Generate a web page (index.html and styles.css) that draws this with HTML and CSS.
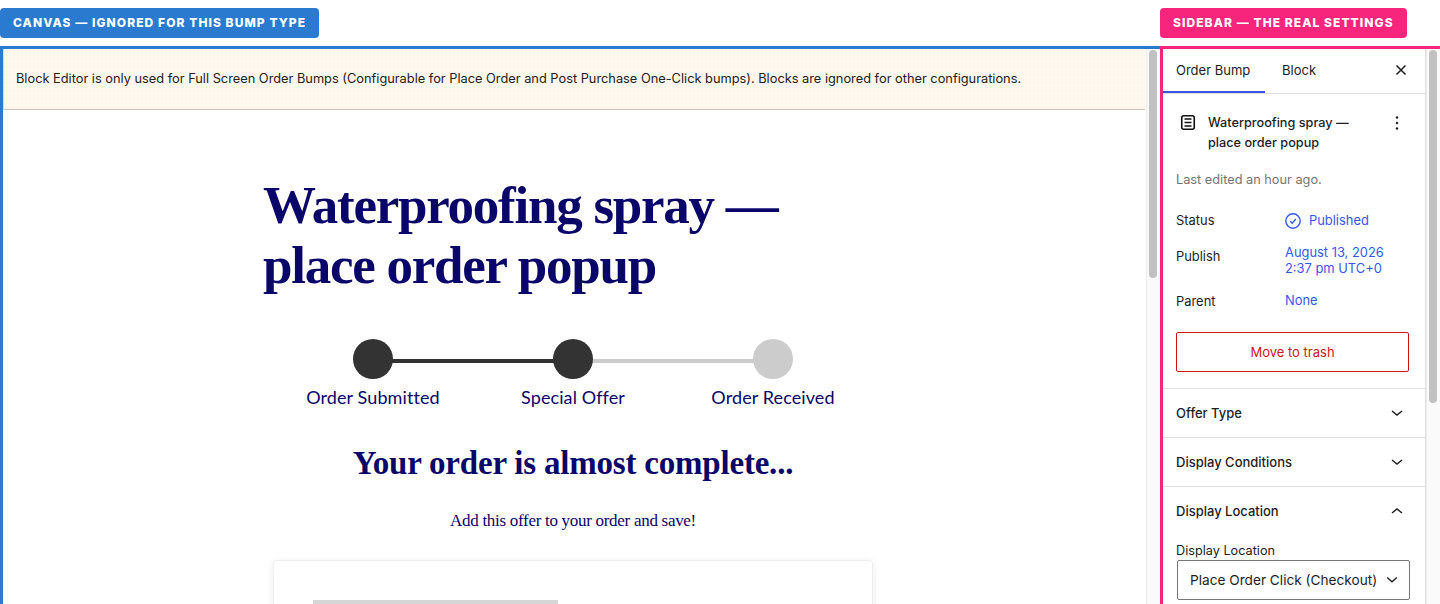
FILE: index.html
```html
<!DOCTYPE html>
<html lang="en">
<head>
    <meta charset="UTF-8">
    <title>Order Bump Editor</title>
    <link rel="stylesheet" href="styles.css">
</head>
<body>
    <div class="canvas-pane">
        <div class="pane-tag tag-canvas">CANVAS — IGNORED FOR THIS BUMP TYPE</div>
        <div class="pane-frame frame-canvas">
            <main class="canvas-content">
                <div class="notice">Block Editor is only used for Full Screen Order Bumps (Configurable for Place Order and Post Purchase One-Click bumps). Blocks are ignored for other configurations.</div>
                <div class="doc">
                    <h1 class="doc-title">Waterproofing spray — place order popup</h1>
                    <div class="steps">
                        <div class="step done">
                            <span class="step-dot"></span>
                            <span class="step-label">Order Submitted</span>
                        </div>
                        <div class="step done">
                            <span class="step-dot"></span>
                            <span class="step-label">Special Offer</span>
                        </div>
                        <div class="step">
                            <span class="step-dot"></span>
                            <span class="step-label">Order Received</span>
                        </div>
                    </div>
                    <h2 class="doc-heading">Your order is almost complete...</h2>
                    <p class="doc-sub">Add this offer to your order and save!</p>
                    <div class="offer-card">
                        <div class="offer-bar"></div>
                    </div>
                </div>
            </main>
            <div class="scrollbar"><div class="thumb thumb-canvas"></div></div>
        </div>
    </div>

    <div class="sidebar-pane">
        <div class="pane-tag tag-sidebar">SIDEBAR — THE REAL SETTINGS</div>
        <div class="pane-frame frame-sidebar">
            <aside class="sidebar">
                <div class="tabs">
                    <div class="tab active">Order Bump</div>
                    <div class="tab">Block</div>
                    <svg class="tab-close" width="24" height="24" viewBox="0 0 24 24"><path d="M7.5 7.5l9 9M16.5 7.5l-9 9" fill="none" stroke="#1e1e1e" stroke-width="1.5"/></svg>
                </div>

                <section class="summary">
                    <div class="summary-head">
                        <svg class="doc-icon" width="24" height="24" viewBox="0 0 24 24"><rect x="5.75" y="4.75" width="12.5" height="13.5" rx="2" fill="none" stroke="#111" stroke-width="1.6"/><path d="M8.5 8h7M8.5 11.5h7M8.5 15h7" stroke="#111" stroke-width="1.6"/></svg>
                        <div class="summary-title">Waterproofing spray — place order popup</div>
                        <svg class="kebab" width="24" height="24" viewBox="0 0 24 24"><circle cx="12" cy="6.5" r="1.2" fill="#1e1e1e"/><circle cx="12" cy="12" r="1.2" fill="#1e1e1e"/><circle cx="12" cy="17.5" r="1.2" fill="#1e1e1e"/></svg>
                    </div>
                    <div class="summary-note">Last edited an hour ago.</div>
                    <div class="meta-row row-status">
                        <span class="meta-label">Status</span>
                        <span class="meta-value status-value">
                            <svg width="16" height="16" viewBox="0 0 16 16"><circle cx="8" cy="8" r="7.2" fill="none" stroke="#3858e9" stroke-width="1.4"/><path d="M5.2 8.2l2 2 3.6-4.2" fill="none" stroke="#3858e9" stroke-width="1.4"/></svg>
                            Published
                        </span>
                    </div>
                    <div class="meta-row row-publish">
                        <span class="meta-label">Publish</span>
                        <span class="meta-value">August 13, 2026<br>2:37 pm UTC+0</span>
                    </div>
                    <div class="meta-row row-parent">
                        <span class="meta-label">Parent</span>
                        <span class="meta-value">None</span>
                    </div>
                    <button type="button" class="trash-btn">Move to trash</button>
                </section>

                <div class="panel">
                    <span>Offer Type</span>
                    <svg width="24" height="24" viewBox="0 0 24 24"><path d="M7 10l5 4 5-4" fill="none" stroke="#1e1e1e" stroke-width="1.5"/></svg>
                </div>
                <div class="panel">
                    <span>Display Conditions</span>
                    <svg width="24" height="24" viewBox="0 0 24 24"><path d="M7 10l5 4 5-4" fill="none" stroke="#1e1e1e" stroke-width="1.5"/></svg>
                </div>
                <div class="panel panel-open">
                    <span>Display Location</span>
                    <svg width="24" height="24" viewBox="0 0 24 24"><path d="M7 14l5-4 5 4" fill="none" stroke="#1e1e1e" stroke-width="1.5"/></svg>
                </div>
                <div class="panel-body">
                    <div class="field-label">Display Location</div>
                    <div class="select-box">
                        <span>Place Order Click (Checkout)</span>
                        <svg width="12" height="8" viewBox="0 0 12 8"><path d="M1.2 1.6L6 5.8l4.8-4.2" fill="none" stroke="#1e1e1e" stroke-width="1.3"/></svg>
                    </div>
                </div>
            </aside>
            <div class="scrollbar"><div class="thumb thumb-sidebar"></div></div>
        </div>
    </div>
</body>
</html>
```

FILE: styles.css
```css
:root {
    --blue: #2a7bcf;
    --pink: #f8257d;
    --link: #3858e9;
    --navy: #0a0569;
    --ink: #1e1e1e;
    --line: #e0e0e0;
}
html, body {
    height: 100%;
}
body {
    margin: 0;
    display: flex;
    height: 604px;
    overflow: hidden;
    background: #fff;
    font-family: Inter, 'Liberation Sans', sans-serif;
    color: var(--ink);
    font-size: 13px;
}
.canvas-pane {
    width: 1160px;
    flex: none;
    display: flex;
    flex-direction: column;
}
.sidebar-pane {
    flex: 1;
    min-width: 0;
    display: flex;
    flex-direction: column;
}
.pane-tag {
    align-self: flex-start;
    height: 30px;
    line-height: 30px;
    margin: 8px 0;
    padding: 0 13px;
    border-radius: 4px;
    color: #fff;
    font-size: 12px;
    font-weight: 800;
    letter-spacing: 1.07px;
    white-space: nowrap;
}
.tag-canvas { background: var(--blue); }
.tag-sidebar { background: var(--pink); }

.pane-frame {
    flex: 1;
    min-height: 0;
    display: flex;
    border-top: 3px solid;
    border-left: 3px solid;
}
.frame-canvas { border-color: var(--blue); }
.frame-sidebar { border-color: var(--pink); }

.scrollbar {
    width: 14px;
    flex: none;
    padding: 1px 3px 0;
    box-sizing: border-box;
    background: #fafafa;
    border-left: 1px solid #ececec;
}
.thumb {
    border-radius: 4px;
    background: #c1c1c1;
    margin-left: -1px;
}
.thumb-canvas { height: 228px; }
.thumb-sidebar { height: 353px; }

/* canvas */
.canvas-content {
    width: 1143px;
    flex: none;
    overflow: hidden;
}
.notice {
    height: 61px;
    box-sizing: border-box;
    margin-right: 1px;
    padding: 0 12px 2px;
    display: flex;
    align-items: center;
    white-space: nowrap;
    background-color: #fef8ef;
    background-image: radial-gradient(#fdf5ea 1px, transparent 1px);
    background-size: 4px 4px;
    border-left: 1px solid #e3d9c4;
    border-bottom: 1px solid #c9c5bc;
    color: #222;
    font-size: 12.8px;
}
.doc {
    width: 620px;
    margin-left: 260px;
    color: var(--navy);
    font-family: 'Liberation Serif', serif;
}
.doc-title {
    width: 540px;
    margin: 65px 0 0;
    font-size: 53px;
    line-height: 60px;
    font-weight: 700;
    letter-spacing: -1.25px;
}
.steps {
    display: flex;
    justify-content: center;
    margin-top: 44px;
}
.step {
    width: 200px;
    display: flex;
    flex-direction: column;
    align-items: center;
    position: relative;
}
.step-dot {
    width: 40px;
    height: 40px;
    border-radius: 50%;
    background: #ccc;
    position: relative;
    z-index: 1;
}
.step.done .step-dot {
    background: #333;
}
.step:not(:last-child)::after {
    content: '';
    position: absolute;
    top: 20px;
    left: 100px;
    width: 200px;
    height: 4px;
    background: #ccc;
}
.step.done:first-child::after {
    background: #333;
}
.step-label {
    margin-top: 8px;
    font-family: Lato, sans-serif;
    font-size: 18px;
    line-height: 21px;
    letter-spacing: 0.1px;
    white-space: nowrap;
}
.doc-heading {
    margin: 33px 0 0;
    text-align: center;
    font-size: 33px;
    line-height: 44px;
    font-weight: 700;
    letter-spacing: -0.2px;
}
.doc-sub {
    margin: 25px 0 0;
    text-align: center;
    font-size: 17px;
    line-height: 22px;
    font-weight: 400;
    letter-spacing: -0.29px;
}
.offer-card {
    width: 600px;
    height: 100px;
    box-sizing: border-box;
    margin: 28px 0 0 10px;
    padding: 39px;
    background: #fff;
    border: 1px solid #eee;
    border-radius: 4px;
    box-shadow: 0 2px 10px rgba(0, 0, 0, 0.08);
}
.offer-bar {
    width: 245px;
    height: 12px;
    background: #d6d6d6;
}

/* sidebar */
.sidebar {
    width: 263px;
    flex: none;
    box-sizing: border-box;
    border-right: 1px solid var(--line);
    overflow: hidden;
}
.tabs {
    display: flex;
    align-items: center;
    height: 45px;
    box-sizing: border-box;
    border-bottom: 1px solid var(--line);
}
.tab {
    height: 44px;
    box-sizing: border-box;
    line-height: 42px;
    padding: 0 13px;
}
.tab:first-child {
    width: 102px;
}
.tab:nth-child(2) {
    padding-left: 17px;
}
.tab.active {
    border-bottom: 2px solid var(--link);
}
.tab-close {
    margin-left: auto;
    margin-right: 12px;
    margin-top: -3px;
}
.summary {
    padding: 19px 16px 16px 13px;
    border-bottom: 1px solid var(--line);
}
.summary-head {
    display: flex;
    align-items: flex-start;
}
.doc-icon {
    flex: none;
    margin: -2px 8px 0 0;
}
.summary-title {
    max-width: 160px;
    flex: 1;
    line-height: 20px;
    font-weight: 500;
    font-size: 12.7px;
}
.kebab {
    flex: none;
    margin: -2px 0 0 auto;
}
.summary-note {
    margin-top: 17px;
    line-height: 20px;
    color: #757575;
    font-size: 12.75px;
}
.meta-row {
    display: flex;
    font-size: 12.9px;
}
.meta-label {
    width: 109px;
    flex: none;
}
.meta-value {
    color: var(--link);
    line-height: 16px;
}
.row-status {
    margin-top: 21px;
    align-items: center;
    line-height: 20px;
}
.status-value {
    display: flex;
    align-items: center;
    gap: 8px;
}
.row-publish {
    margin-top: 14px;
}
.row-publish .meta-label {
    line-height: 16px;
    margin-top: 4px;
}
.row-parent {
    margin-top: 16px;
    align-items: center;
}
.trash-btn {
    display: block;
    width: 233px;
    height: 40px;
    margin-top: 23px;
    background: #fff;
    border: 1px solid #cc1818;
    border-radius: 2px;
    color: #cc1818;
    font-family: inherit;
    font-size: 13px;
}
.panel {
    height: 49px;
    box-sizing: border-box;
    padding: 0 16px 0 13px;
    display: flex;
    align-items: center;
    justify-content: space-between;
    border-bottom: 1px solid var(--line);
    font-weight: 500;
    font-size: 13px;
}
.panel-open {
    padding-bottom: 2px;
    border-bottom: none;
}
.panel-body {
    padding: 7px 15px 0 13px;
}
.field-label {
    line-height: 16px;
    font-size: 12.7px;
}
.select-box {
    height: 40px;
    box-sizing: border-box;
    margin: 1px 0 0 1px;
    padding: 0 11px 0 12px;
    display: flex;
    align-items: center;
    justify-content: space-between;
    border: 1px solid #757575;
    border-radius: 2px;
    font-size: 13.65px;
    white-space: nowrap;
}
```
